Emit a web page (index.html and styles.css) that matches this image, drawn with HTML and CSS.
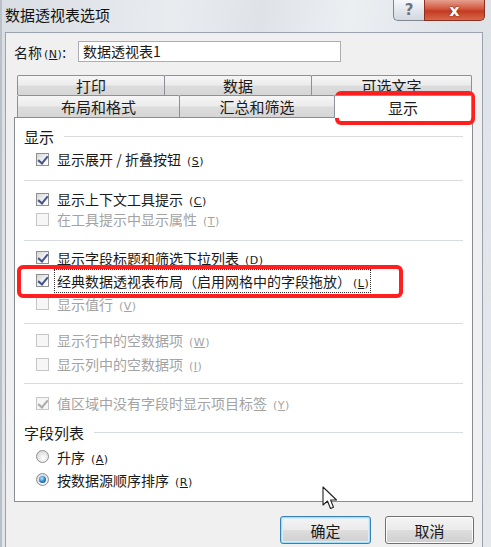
FILE: index.html
```html
<!DOCTYPE html>
<html lang="zh-CN">
<head>
<meta charset="utf-8">
<title>数据透视表选项</title>
<link rel="stylesheet" href="styles.css">
</head>
<body>
<div class="window">
  <div class="titlebar">
    <div class="title">数据透视表选项</div>
    <div class="caption-buttons">
      <div class="cap-btn help">?</div>
      <div class="cap-btn close">x</div>
    </div>
  </div>
  <div class="client">
    <div class="name-row">
      <span class="name-label">名称<span class="acc tight">(<u>N</u>)</span>:</span>
      <div class="name-input">数据透视表1</div>
    </div>
    <div class="tabset">
      <div class="tab-row back">
        <div class="tab t-print">打印</div>
        <div class="tab t-data">数据</div>
        <div class="tab t-alt">可选文字</div>
      </div>
      <div class="tab-row front">
        <div class="tab t-layout">布局和格式</div>
        <div class="tab t-totals">汇总和筛选</div>
        <div class="tab t-display selected">显示</div>
      </div>
      <div class="panel">
        <div class="group-head">显示</div>
        <div class="opt h20 mt3"><span class="cb checked"></span><span class="lbl">显示展开<span class="slash">/</span>折叠按钮<span class="acc">(<u>S</u>)</span></span></div>
        <div class="sep mt11"></div>
        <div class="opt h20 mt8"><span class="cb checked"></span><span class="lbl">显示上下文工具提示<span class="acc">(<u>C</u>)</span></span></div>
        <div class="opt h20 disabled"><span class="cb"></span><span class="lbl">在工具提示中显示属性<span class="acc">(<u>T</u>)</span></span></div>
        <div class="sep mt11"></div>
        <div class="opt h23 mt5"><span class="cb checked"></span><span class="lbl">显示字段标题和筛选下拉列表<span class="acc">(<u>D</u>)</span></span></div>
        <div class="opt h23"><span class="cb checked"></span><span class="lbl focus">经典数据透视表布局（启用网格中的字段拖放）<span class="acc tight">(<u>L</u>)</span></span></div>
        <div class="opt h23 disabled"><span class="cb"></span><span class="lbl">显示值行<span class="acc">(<u>V</u>)</span></span></div>
        <div class="sep mt8"></div>
        <div class="opt h24 mt4 disabled"><span class="cb"></span><span class="lbl">显示行中的空数据项<span class="acc">(<u>W</u>)</span></span></div>
        <div class="opt h24 disabled"><span class="cb"></span><span class="lbl">显示列中的空数据项<span class="acc">(<u>I</u>)</span></span></div>
        <div class="sep mt7"></div>
        <div class="opt h20 mt9 disabled"><span class="cb checked"></span><span class="lbl">值区域中没有字段时显示项目标签<span class="acc">(<u>Y</u>)</span></span></div>
        <div class="group-head mt9">字段列表</div>
        <div class="opt h23 mt3"><span class="rb"></span><span class="lbl">升序<span class="acc">(<u>A</u>)</span></span></div>
        <div class="opt h23"><span class="rb checked"></span><span class="lbl">按数据源顺序排序<span class="acc">(<u>R</u>)</span></span></div>
      </div>
    </div>
    <div class="buttons">
      <div class="btn default">确定</div>
      <div class="btn">取消</div>
    </div>
  </div>
</div>
<div class="highlight hl-tab"></div>
<div class="highlight hl-opt"></div>
<svg class="cursor" width="16" height="26" viewBox="0 0 16 26">
  <path d="M1 1 L1 19 L5.5 15 L8.5 22.5 L11.5 21.2 L8.6 14 L14.5 14 Z" fill="#fff" stroke="#222" stroke-width="1.1" stroke-linejoin="round"/>
</svg>
</body>
</html>
```
FILE: styles.css
```css
* { box-sizing: border-box; }
html, body { margin: 0; padding: 0; }
body {
  width: 491px;
  height: 547px;
  overflow: hidden;
  position: relative;
  font-family: "Noto Sans CJK SC", "Noto Sans", sans-serif;
  font-size: 14px;
  color: #1a1a1a;
  background: linear-gradient(100deg, #d9dee4 0%, #e9ecef 30%, #dfe3e8 45%, #eceff2 60%, #dde2e7 80%, #e6e9ec 100%);
}
.window {
  display: flex;
  flex-direction: column;
  height: 547px;
  border-left: 2px solid #b9c0c8;
}
.titlebar {
  height: 32px;
  display: flex;
  align-items: flex-start;
}
.title {
  font-size: 15px;
  line-height: 29px;
  padding-left: 3px;
  color: #111;
}
.caption-buttons {
  margin-left: auto;
  margin-right: 6px;
  display: flex;
}
.cap-btn {
  height: 21px;
  display: flex;
  align-items: center;
  justify-content: center;
  border: 1px solid #7c8794;
  border-top: none;
}
.help {
  width: 31px;
  border-radius: 0 0 0 5px;
  background: linear-gradient(#f7f8fa, #e3e7ec 50%, #d3d9e0);
  color: #6b7480;
  font-family: "DejaVu Sans", sans-serif;
  font-size: 15px;
  font-weight: bold;
  border-right: none;
}
.close {
  width: 61px;
  border-radius: 0 0 5px 0;
  border-color: #8e2f22;
  background: linear-gradient(#e6a08e, #d2563c 45%, #c23b22 55%, #d8684a);
  color: #fff;
  font-family: "DejaVu Sans", sans-serif;
  font-weight: bold;
  font-size: 16px;
  text-shadow: 0 0 2px #6a1a10;
}
.client {
  flex: 1;
  margin-left: 3px;
  width: 478px;
  background: #f0f0f0;
  border: 1px solid #9aa3ad;
  border-bottom: none;
}
.name-row {
  display: flex;
  align-items: center;
  margin-top: 8px;
  height: 21px;
  padding-left: 8px;
}
.name-label {
  width: 64px;
  font-size: 14px;
}
.acc {
  font-family: "DejaVu Sans", sans-serif;
  font-size: 11px;
  margin-left: 6px;
  letter-spacing: 0.5px;
}
.acc.tight { margin-left: 2px; }
.slash {
  display: inline-block;
  width: 12px;
  text-align: center;
}
.name-input {
  width: 263px;
  height: 21px;
  border: 1px solid #abadb3;
  background: #fff;
  padding-left: 4px;
  line-height: 19px;
  font-size: 14px;
}
.tabset {
  margin-top: 13px;
  margin-left: 8px;
  width: 459px;
}
.tab-row {
  display: flex;
  padding-left: 3px;
  position: relative;
}
.tab {
  display: flex;
  align-items: center;
  justify-content: center;
  font-size: 15px;
  border: 1px solid #8c9097;
  border-bottom: none;
  border-radius: 2px 2px 0 0;
  background: linear-gradient(#f6f6f6, #ececec 45%, #dcdcdc 55%, #d6d6d6);
  margin-right: -1px;
}
.back .tab { height: 20px; }
.front .tab { height: 22px; }
.t-print { width: 148px; }
.t-data { width: 148px; }
.t-alt { width: 161px; }
.t-layout { width: 163px; }
.t-totals { width: 156px; }
.t-display { width: 138px; }
.tab.selected {
  background: #fff;
  height: 23px;
  margin-bottom: -1px;
  position: relative;
  z-index: 1;
}
.panel {
  height: 385px;
  background: #fff;
  border: 1px solid #898c95;
  padding: 8px 9px 0 9px;
}
.group-head {
  display: flex;
  align-items: center;
  height: 20px;
  font-size: 15px;
}
.group-head::after {
  content: "";
  flex: 1;
  height: 1px;
  background: #d8dce1;
  margin-left: 10px;
}
.opt {
  display: flex;
  align-items: center;
  padding-left: 12px;
}
.h20 { height: 20px; }
.h23 { height: 23px; }
.h24 { height: 24px; }
.mt3 { margin-top: 3px; }
.mt4 { margin-top: 4px; }
.mt5 { margin-top: 5px; }
.mt7 { margin-top: 7px; }
.mt8 { margin-top: 8px; }
.mt9 { margin-top: 9px; }
.mt11 { margin-top: 11px; }
.sep {
  height: 1px;
  background: #d8dce1;
}
.lbl {
  font-size: 14px;
  white-space: nowrap;
}
.lbl.focus {
  outline: 1px dotted #333;
  outline-offset: 1px;
  margin-left: -1px;
  padding-left: 1px;
}
.disabled .lbl { color: #a3a3a3; }
.cb {
  width: 13px;
  height: 13px;
  border: 1px solid #8e8f8f;
  background: linear-gradient(135deg, #d6d6d6, #f4f4f4 60%, #ffffff);
  margin-right: 8px;
  flex: none;
  position: relative;
}
.cb.checked::after {
  content: "";
  position: absolute;
  left: 3px;
  top: 0px;
  width: 4px;
  height: 8px;
  border-right: 2px solid #44528f;
  border-bottom: 2px solid #44528f;
  transform: rotate(40deg);
}
.disabled .cb {
  border-color: #c6c6c6;
  background: #f6f6f6;
}
.disabled .cb.checked::after {
  border-color: #aaaaaa;
}
.rb {
  width: 13px;
  height: 13px;
  border-radius: 50%;
  border: 1px solid #8e8f8f;
  background: radial-gradient(circle at 60% 65%, #ffffff, #e2e2e2 60%, #cfcfcf);
  margin-right: 8px;
  flex: none;
  position: relative;
}
.rb.checked::after {
  content: "";
  position: absolute;
  left: 2px;
  top: 2px;
  width: 7px;
  height: 7px;
  border-radius: 50%;
  background: radial-gradient(circle at 40% 35%, #b8e6ff, #2a86d0 50%, #0b3f7d);
}
.buttons {
  display: flex;
  justify-content: flex-end;
  gap: 14px;
  margin-top: 14px;
  padding-right: 8px;
}
.btn {
  width: 89px;
  height: 28px;
  border: 1px solid #707070;
  border-radius: 3px;
  background: linear-gradient(#f4f4f4, #ebebeb 48%, #dddddd 52%, #cfcfcf);
  display: flex;
  align-items: center;
  justify-content: center;
  font-size: 15px;
  box-shadow: inset 0 0 0 1px #fcfcfc;
}
.btn.default {
  width: 91px;
  border-color: #3c7fb1;
  box-shadow: inset 0 0 0 1px #9ee0fc, inset 0 0 0 2px #d4eefb;
}
.highlight {
  position: absolute;
  border: 4px solid #ff1f1f;
  border-radius: 6px;
}
.hl-tab {
  left: 335px;
  top: 91px;
  width: 140px;
  height: 34px;
}
.hl-opt {
  left: 17px;
  top: 265px;
  width: 386px;
  height: 33px;
}
.cursor {
  position: absolute;
  left: 322px;
  top: 486px;
}
```
